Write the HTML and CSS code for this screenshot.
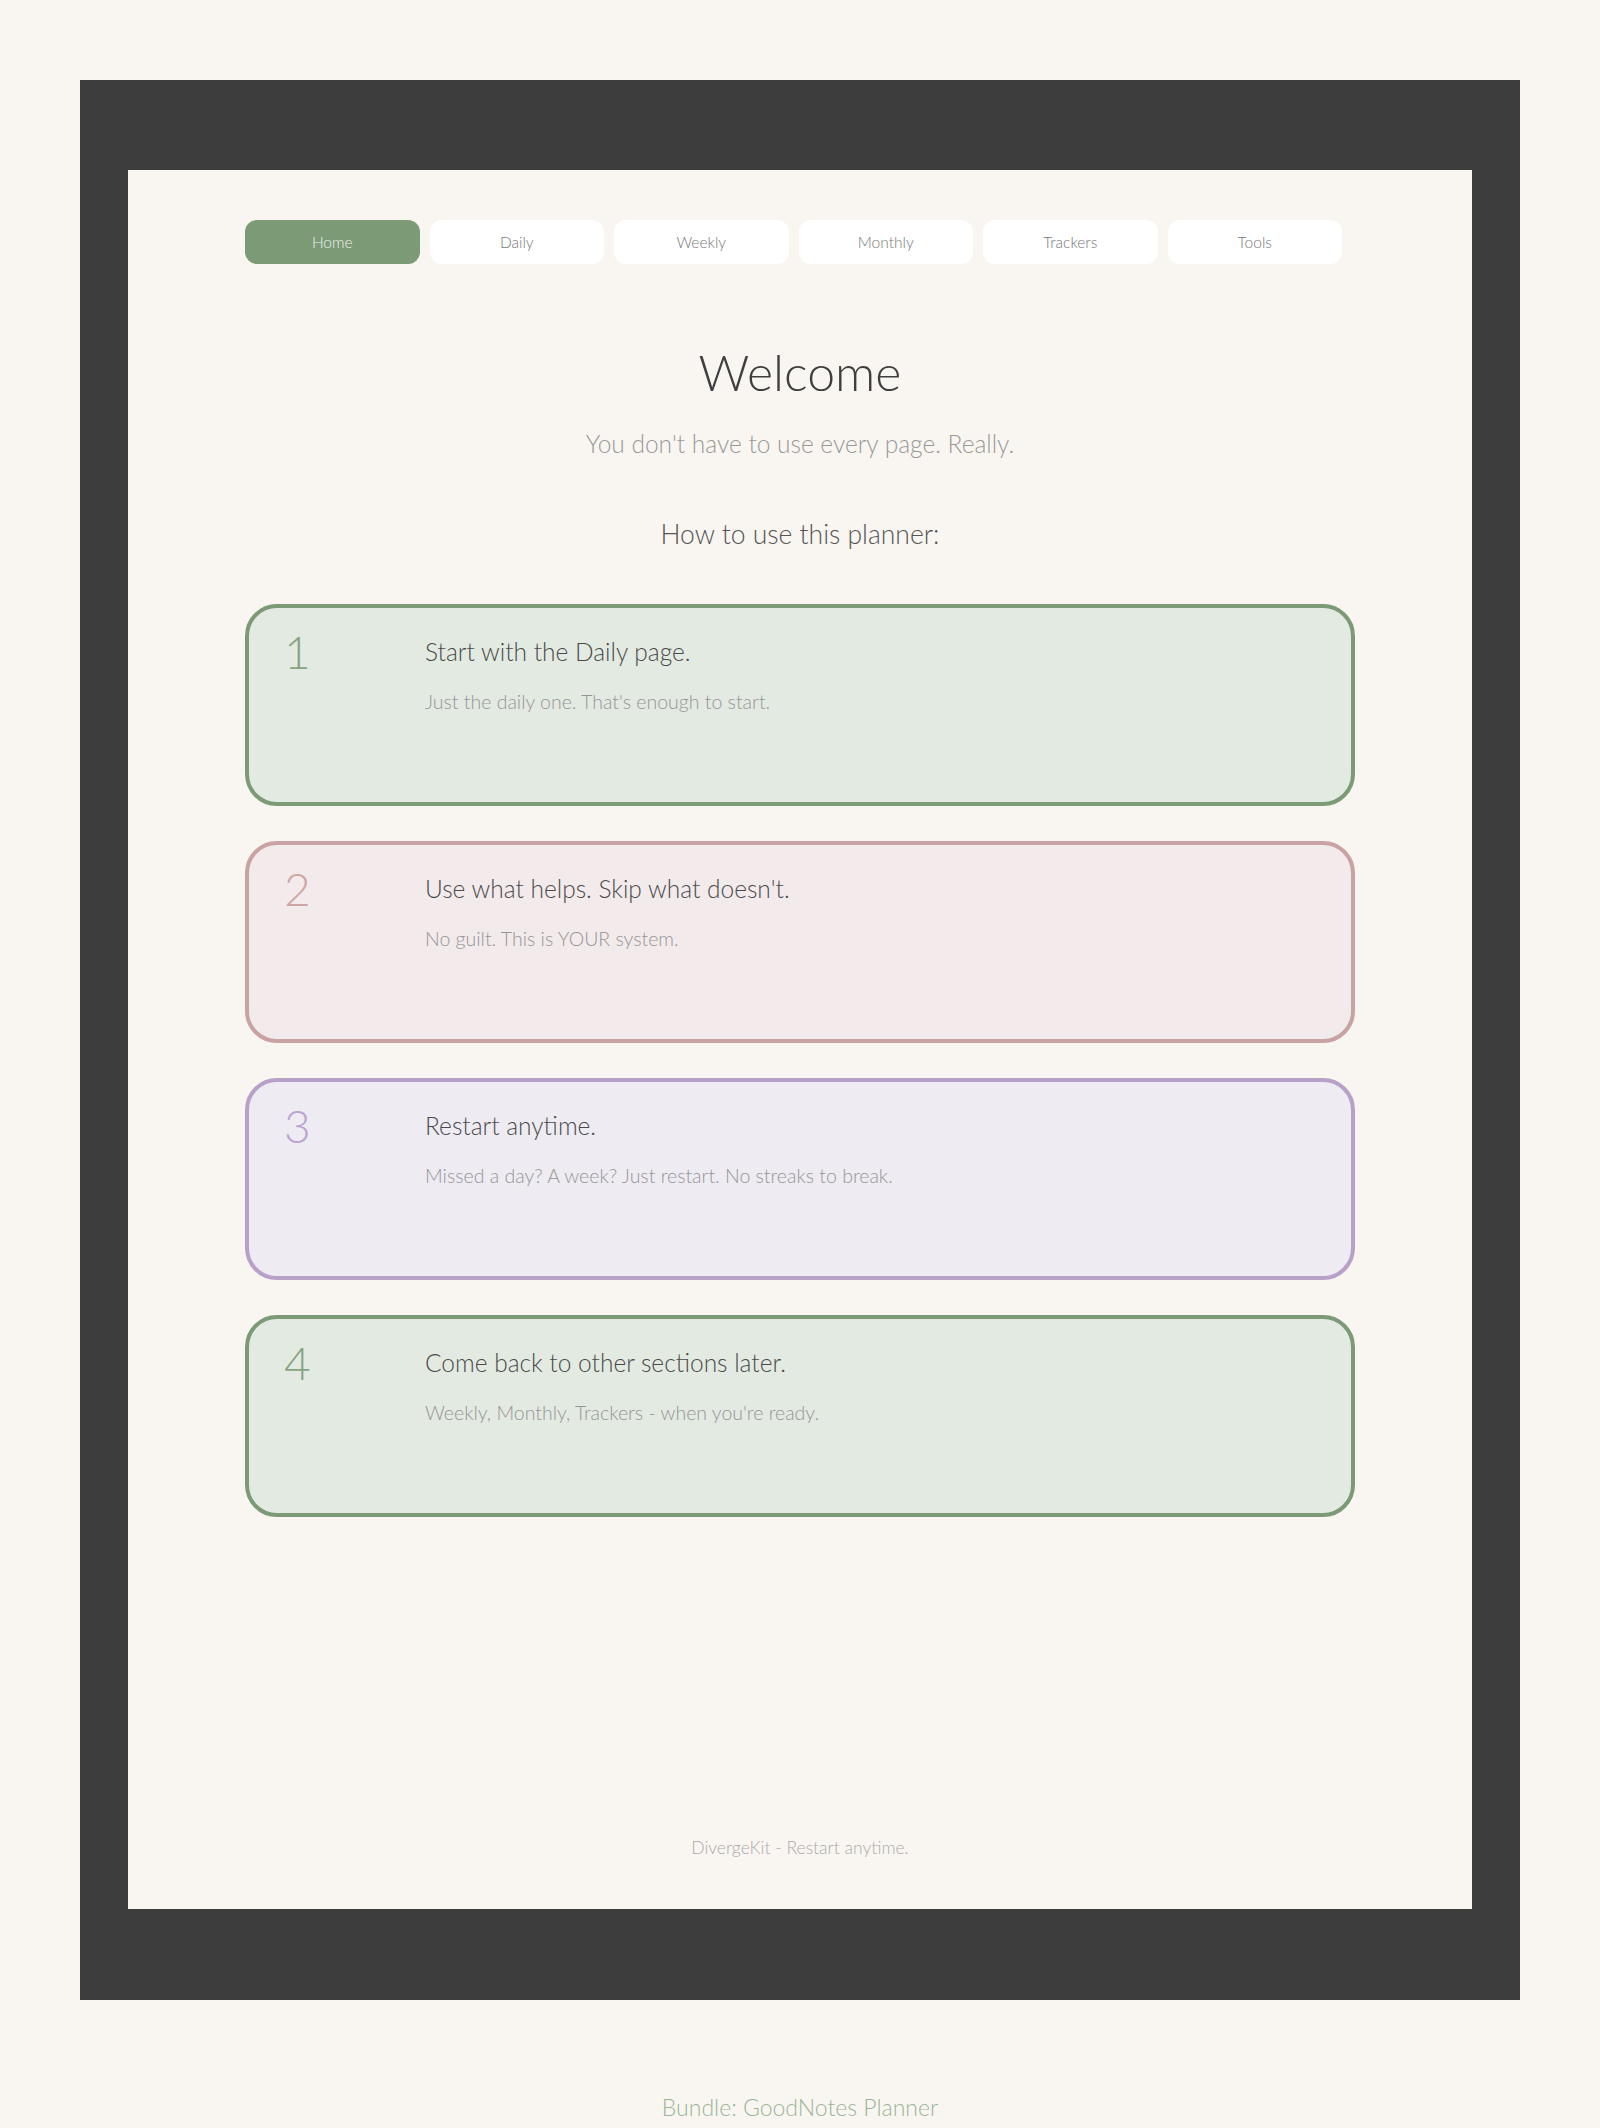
FILE: index.html
```html
<!DOCTYPE html>
<html lang="en">
<head>
<meta charset="utf-8">
<title>DivergeKit Planner - Home</title>
<link rel="stylesheet" href="styles.css">
</head>
<body>
<div class="device">
  <div class="sheet">
    <nav class="tabs">
      <a class="tab tab-active">Home</a>
      <a class="tab">Daily</a>
      <a class="tab">Weekly</a>
      <a class="tab">Monthly</a>
      <a class="tab">Trackers</a>
      <a class="tab">Tools</a>
    </nav>
    <h1 class="title">Welcome</h1>
    <p class="subtitle">You don't have to use every page. Really.</p>
    <h2 class="howto">How to use this planner:</h2>
    <div class="steps">
      <div class="step step-green">
        <div class="step-num">1</div>
        <div class="step-body">
          <div class="step-title">Start with the Daily page.</div>
          <div class="step-desc">Just the daily one. That's enough to start.</div>
        </div>
      </div>
      <div class="step step-pink">
        <div class="step-num">2</div>
        <div class="step-body">
          <div class="step-title">Use what helps. Skip what doesn't.</div>
          <div class="step-desc">No guilt. This is YOUR system.</div>
        </div>
      </div>
      <div class="step step-purple">
        <div class="step-num">3</div>
        <div class="step-body">
          <div class="step-title">Restart anytime.</div>
          <div class="step-desc">Missed a day? A week? Just restart. No streaks to break.</div>
        </div>
      </div>
      <div class="step step-green">
        <div class="step-num">4</div>
        <div class="step-body">
          <div class="step-title">Come back to other sections later.</div>
          <div class="step-desc">Weekly, Monthly, Trackers - when you're ready.</div>
        </div>
      </div>
    </div>
    <footer class="sheet-footer">DivergeKit - Restart anytime.</footer>
  </div>
</div>
<p class="bundle">Bundle: GoodNotes Planner</p>
</body>
</html>
```

FILE: styles.css
```css
* { box-sizing: border-box; }

html, body {
  margin: 0;
  padding: 0;
  background: #f9f6f1;
}

body {
  font-family: "Lato", "Nunito", "Noto Sans", sans-serif;
  font-weight: 300;
  color: #444;
  line-height: 1.2;
}

.device {
  margin: 80px 80px 0;
  background: #3d3d3d;
  padding: 90px 48px 91px;
}

.sheet {
  background: #f9f6f1;
  height: 1739px;
  padding: 50px 117px 51px;
  display: flex;
  flex-direction: column;
}

.tabs {
  display: flex;
  gap: 10px;
}

.tab {
  width: 174.5px;
  height: 44px;
  border-radius: 12px;
  background: #ffffff;
  color: #777777;
  font-size: 15.5px;
  font-weight: 300;
  display: flex;
  align-items: center;
  justify-content: center;
}

.tab-active {
  background: #7c9a76;
  color: #eef2ec;
}

.title {
  margin: 77.5px 0 0;
  text-align: center;
  font-size: 50px;
  font-weight: 300;
  color: #3f3f3f;
}

.subtitle {
  margin: 27px 0 0;
  text-align: center;
  font-size: 24.5px;
  font-weight: 300;
  color: #999999;
}

.howto {
  margin: 61.5px 0 0;
  text-align: center;
  font-size: 26.5px;
  font-weight: 300;
  color: #555;
}

.steps {
  margin-top: 52.5px;
  display: flex;
  flex-direction: column;
  gap: 35px;
}

.step {
  height: 202px;
  border: 4px solid #7c9a76;
  border-radius: 32px;
  padding: 29px 32px;
  display: flex;
  align-items: flex-start;
}

.step-green { background: #e3eae2; border-color: #7c9a76; }
.step-pink { background: #f3eaeb; border-color: #c9a2a3; }
.step-purple { background: #eeebf2; border-color: #b9a0c9; }

.step-num {
  flex: none;
  width: 144px;
  font-size: 46px;
  font-weight: 300;
  line-height: 1;
  margin-top: -8px;
  padding-left: 3px;
}

.step-green .step-num { color: #86a481; }
.step-pink .step-num { color: #cfa5a6; }
.step-purple .step-num { color: #bca3cf; }

.step-title {
  font-size: 24.5px;
  font-weight: 300;
  color: #4a4a4a;
}

.step-desc {
  margin-top: 23.5px;
  font-size: 19.5px;
  font-weight: 300;
  color: #969696;
}

.sheet-footer {
  margin-top: auto;
  text-align: center;
  font-size: 17.5px;
  color: #aaaaaa;
}

.bundle {
  margin: 94px 0 0;
  text-align: center;
  font-size: 23px;
  font-weight: 300;
  color: #9ab597;
}
```
